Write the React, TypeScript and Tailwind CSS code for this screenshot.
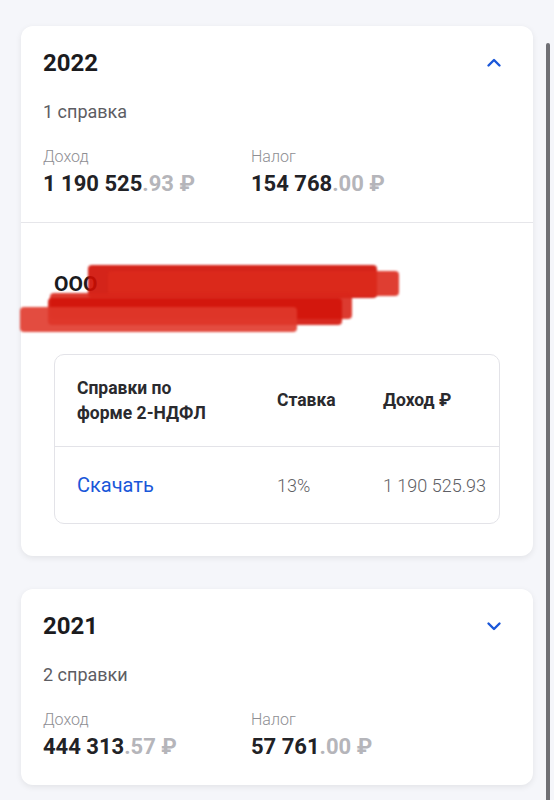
import React from "react";

const font = { fontFamily: "Roboto, 'Noto Sans', sans-serif" };

function Chevron({ up }: { up: boolean }) {
  return (
    <div className="w-[34px] h-[34px] flex items-center justify-center">
      <svg width="16" height="16" viewBox="0 0 16 16" fill="none">
        <path
          d={up ? "M2.5 10.5 L8 5 L13.5 10.5" : "M2.5 5.5 L8 11 L13.5 5.5"}
          stroke="#1a57d9"
          strokeWidth="2.4"
          strokeLinecap="round"
          strokeLinejoin="round"
        />
      </svg>
    </div>
  );
}

function Money({ whole, cents }: { whole: string; cents: string }) {
  return (
    <div className="text-[22px] leading-[26px] font-bold text-[#222226] mt-[4px]">
      {whole}
      <span className="text-[#b5b5ba]">.{cents} ₽</span>
    </div>
  );
}

function Summary({
  year,
  count,
  income,
  tax,
  open,
}: {
  year: string;
  count: string;
  income: [string, string];
  tax: [string, string];
  open: boolean;
}) {
  return (
    <div className="pt-[20px] px-[22px] pb-[25px]">
      <div className="flex items-center justify-between h-[34px]">
        <div className="text-[24px] font-bold text-[#1b1b1e]">{year}</div>
        <Chevron up={open} />
      </div>
      <div className="mt-[20px] text-[18px] leading-[24px] text-[#5d5d63]">{count}</div>
      <div className="mt-[23px] grid grid-cols-[208px_1fr]">
        <div>
          <div className="text-[16px] leading-[20px] font-light text-[#8e8e93]">Доход</div>
          <Money whole={income[0]} cents={income[1]} />
        </div>
        <div>
          <div className="text-[16px] leading-[20px] font-light text-[#8e8e93]">Налог</div>
          <Money whole={tax[0]} cents={tax[1]} />
        </div>
      </div>
    </div>
  );
}

function Scribble() {
  const strokes = [
    "left-[67px] top-[239px] w-[289px] h-[33px] bg-[#d00d02]",
    "left-[87px] top-[245px] w-[291px] h-[25px] bg-[#dc2a1c]",
    "left-[29px] top-[267px] w-[302px] h-[26px] bg-[#d9261a]",
    "left-[27px] top-[272px] w-[294px] h-[27px] bg-[#d3140a]",
    "left-[-1px] top-[281px] w-[277px] h-[25px] bg-[#e0392c]",
  ];
  return (
    <>
      {strokes.map((s, i) => (
        <div key={i} className={"absolute rounded-[4px] opacity-90 blur-[1px] " + s} />
      ))}
    </>
  );
}

export default function App() {
  return (
    <div style={font} className="relative min-h-[800px] bg-[#f5f6fa] px-[21px] pt-[26px] pb-[17px]">
      <div className="relative bg-white rounded-[12px] shadow-[0_2px_6px_rgba(0,0,0,0.08)]">
        <Summary
          year="2022"
          count="1 справка"
          income={["1 190 525", "93"]}
          tax={["154 768", "00"]}
          open
        />
        <div className="border-t border-[#e6e6ea] px-[33px] pt-[47px] pb-[32px]">
          <div className="h-[84px]">
            <div className="text-[21px] leading-[28px] font-bold text-[#1b1b1e]">ООО</div>
          </div>
          <div className="border border-[#e3e3e8] rounded-[10px]">
            <div className="grid grid-cols-[200px_106px_1fr] pl-[22px] h-[92px] items-center border-b border-[#e3e3e8] text-[17.5px] font-bold text-[#2a2a2e]">
              <div className="leading-[25px]">
                Справки по
                <br />
                форме 2-НДФЛ
              </div>
              <div>Ставка</div>
              <div>Доход ₽</div>
            </div>
            <div className="grid grid-cols-[200px_106px_1fr] pl-[22px] h-[76px] items-center text-[18px] font-light text-[#5f5f65] whitespace-nowrap">
              <div className="text-[20px] font-normal text-[#1a57d9]">Скачать</div>
              <div>13%</div>
              <div>1 190 525.93</div>
            </div>
          </div>
        </div>
        <Scribble />
      </div>

      <div className="mt-[33px] bg-white rounded-[12px] shadow-[0_2px_6px_rgba(0,0,0,0.08)]">
        <Summary
          year="2021"
          count="2 справки"
          income={["444 313", "57"]}
          tax={["57 761", "00"]}
          open={false}
        />
      </div>

      <div className="absolute left-[546px] top-[43px] bottom-0 w-[4px] rounded-full bg-[#6f6f74]" />
    </div>
  );
}
